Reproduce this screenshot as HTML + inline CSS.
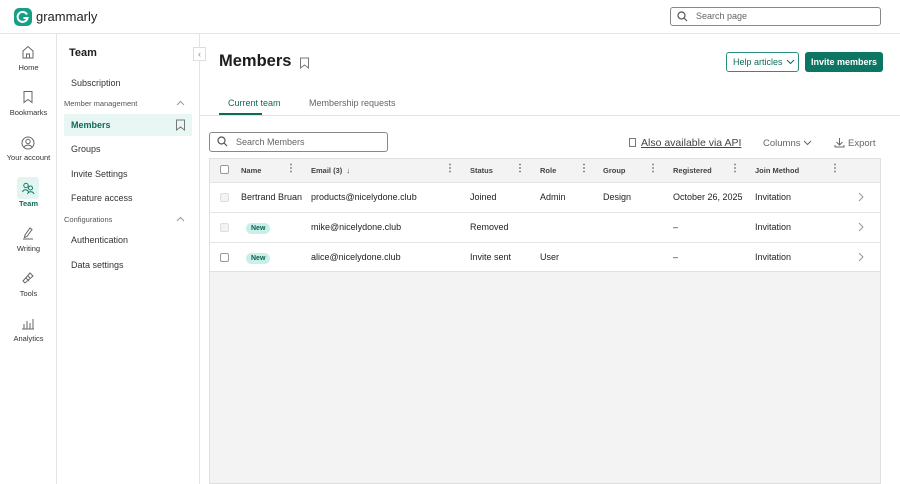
<!DOCTYPE html><html><head><style>
*{box-sizing:border-box;margin:0;padding:0}
body{width:900px;height:484px;overflow:hidden;font-family:"Liberation Sans",sans-serif;color:#1d1d1d;background:#fff;position:relative;font-size:9px}
.a{position:absolute}
.top{left:0;top:0;width:900px;height:34px;border-bottom:1px solid #e4e4e4}
.rail{left:0;top:34px;width:57px;height:450px;border-right:1px solid #e4e4e4}
.ri{position:absolute;left:0;width:57px;text-align:center;font-size:7.5px;color:#333}
.ic{position:absolute;left:21px}
.side{left:57px;top:34px;width:143px;height:450px;border-right:1px solid #e4e4e4}
.sn{position:absolute;left:14px;font-size:9px;color:#333}
.sh{position:absolute;left:7px;font-size:7.5px;color:#555}
.th{position:absolute;top:166px;font-size:7.5px;color:#444;font-weight:bold}
.td{position:absolute;font-size:9px;color:#222}
.dots{position:absolute;top:164px;font-size:10px;color:#666;font-weight:bold;line-height:1}
.new{background:#c8efe8;color:#0d5c4f;font-size:7px;font-weight:bold;padding:2px 5px;border-radius:7px}
.cb{position:absolute;left:220px;width:9px;height:9px;border:1px solid #bbb;border-radius:2px;background:#f3f3f3}
</style></head><body>
<div class="a top"></div>
<svg class="a" style="left:14px;top:8px" width="18" height="18" viewBox="0 0 18 18"><rect width="18" height="18" rx="5" fill="#15a085"/><path d="M13 6.5A5 5 0 1 0 13.5 10H9.5" stroke="#fff" stroke-width="2" fill="none"/></svg>
<div class="a" style="left:36px;top:9px;font-size:13px;color:#222">grammarly</div>
<div class="a" style="left:670px;top:7px;width:211px;height:19px;border:1px solid #888;border-radius:3px"></div>
<svg class="a" style="left:677px;top:11px" width="11" height="11"><circle cx="4.5" cy="4.5" r="3.5" stroke="#555" fill="none" stroke-width="1.2"/><path d="M7 7l3 3" stroke="#555" stroke-width="1.2"/></svg>
<div class="a" style="left:696px;top:11px;font-size:9px;color:#666">Search page</div>

<div class="a rail"></div>
<svg class="ic" style="top:45px" width="14" height="14" fill="none" stroke="#666" stroke-width="1"><path d="M2 6L7 1.5 12 6V13H2Z"/><path d="M5.5 13V9h3v4"/></svg><div class="ri" style="top:63px">Home</div>
<svg class="ic" style="top:90px" width="14" height="14" fill="none" stroke="#666" stroke-width="1"><path d="M3 1.5h8v11L7 9.5 3 12.5Z"/></svg><div class="ri" style="top:108px">Bookmarks</div>
<svg class="ic" style="top:136px" width="14" height="14" fill="none" stroke="#666" stroke-width="1"><circle cx="7" cy="7" r="6"/><circle cx="7" cy="5.5" r="2.2"/><path d="M3 11c2-2.5 6-2.5 8 0"/></svg><div class="ri" style="top:153px">Your account</div>
<div class="a" style="left:17px;top:177px;width:22px;height:22px;background:#e3f5f1;border-radius:3px"></div>
<svg class="ic" style="top:181px" width="14" height="14" fill="none" stroke="#0d7a66" stroke-width="1"><circle cx="5" cy="4.5" r="2.2"/><circle cx="9.5" cy="7" r="2"/><path d="M1.5 11c1-3 5-3 6 0M6.5 13c1-3 5.5-3 6.5 0"/></svg><div class="ri" style="top:199px;color:#0d6b5a;font-weight:bold">Team</div>
<svg class="ic" style="top:226px" width="14" height="14" fill="none" stroke="#666" stroke-width="1"><path d="M4 9l5-7 2 1.5-5 7-2.5 1z"/><path d="M2 13h10"/></svg><div class="ri" style="top:244px">Writing</div>
<svg class="ic" style="top:271px" width="14" height="14" fill="none" stroke="#666" stroke-width="1"><path d="M2 10l7-8 3 3-8 7z"/><path d="M5 7l3 3M7 5l2 2"/></svg><div class="ri" style="top:289px">Tools</div>
<svg class="ic" style="top:316px" width="14" height="14" fill="none" stroke="#666" stroke-width="1"><path d="M1 13h12M3 13V8M6 13V5M9 13V7M12 13V3"/></svg><div class="ri" style="top:334px">Analytics</div>

<div class="a side"></div>
<div class="a" style="left:69px;top:47px;font-size:11px;font-weight:bold">Team</div>
<div class="a" style="left:193px;top:47px;width:13px;height:14px;border:1px solid #ddd;background:#fff;font-size:9px;color:#888;text-align:center;line-height:12px">‹</div>
<div class="sn" style="left:71px;top:78px">Subscription</div>
<div class="sh" style="left:64px;top:99px">Member management</div>
<svg class="a" style="left:176px;top:100px" width="9" height="6" fill="none" stroke="#999"><path d="M1 5l3.5-3.5L8 5"/></svg>
<div class="a" style="left:64px;top:114px;width:128px;height:22px;background:#e8f6f4"></div>
<div class="sn" style="left:71px;top:120px;color:#0d6b5a;font-weight:bold">Members</div>
<svg class="a" style="left:175px;top:119px" width="11" height="12" fill="none" stroke="#777"><path d="M1.5 1h8v10L5.5 8 1.5 11Z"/></svg>
<div class="sn" style="left:71px;top:144px">Groups</div>
<div class="sn" style="left:71px;top:169px">Invite Settings</div>
<div class="sn" style="left:71px;top:193px">Feature access</div>
<div class="sh" style="left:64px;top:215px">Configurations</div>
<svg class="a" style="left:176px;top:216px" width="9" height="6" fill="none" stroke="#999"><path d="M1 5l3.5-3.5L8 5"/></svg>
<div class="sn" style="left:71px;top:235px">Authentication</div>
<div class="sn" style="left:71px;top:260px">Data settings</div>

<div class="a" style="left:219px;top:52px;font-size:16.5px;font-weight:bold">Members</div>
<svg class="a" style="left:299px;top:57px" width="11" height="12" fill="none" stroke="#777"><path d="M1.5 1h8v10L5.5 8 1.5 11Z"/></svg>
<div class="a" style="left:726px;top:52px;width:73px;height:20px;border:1px solid #2a8f7c;border-radius:3px;font-size:9px;color:#0d6b5a;line-height:18px;padding-left:6px">Help articles</div>
<svg class="a" style="left:786px;top:59px" width="9" height="6" fill="none" stroke="#0d6b5a"><path d="M1 1l3.5 3.5L8 1"/></svg>
<div class="a" style="left:805px;top:52px;width:78px;height:20px;background:#0d7663;border-radius:3px;font-size:9px;color:#fff;font-weight:bold;line-height:20px;text-align:center">Invite members</div>
<div class="a" style="left:228px;top:98px;font-size:9px;color:#0d6b5a">Current team</div>
<div class="a" style="left:219px;top:113px;width:43px;height:2px;background:#0d6b5a"></div>
<div class="a" style="left:309px;top:98px;font-size:9px;color:#666">Membership requests</div>
<div class="a" style="left:200px;top:115px;width:700px;height:1px;background:#e2e2e2"></div>

<div class="a" style="left:209px;top:132px;width:179px;height:20px;border:1px solid #888;border-radius:3px"></div>
<svg class="a" style="left:217px;top:136px" width="11" height="11"><circle cx="4.5" cy="4.5" r="3.5" stroke="#555" fill="none" stroke-width="1.2"/><path d="M7 7l3 3" stroke="#555" stroke-width="1.2"/></svg>
<div class="a" style="left:236px;top:137px;font-size:9px;color:#666">Search Members</div>
<div class="a" style="left:629px;top:138px;width:7px;height:9px;border:1px solid #777"></div>
<div class="a" style="left:641px;top:137px;font-size:10.5px;color:#444;text-decoration:underline">Also available via API</div>
<div class="a" style="left:763px;top:138px;font-size:9.5px;color:#666">Columns</div>
<svg class="a" style="left:803px;top:140px" width="9" height="6" fill="none" stroke="#666"><path d="M1 1l3.5 3.5L8 1"/></svg>
<svg class="a" style="left:834px;top:137px" width="11" height="11" fill="none" stroke="#666"><path d="M5.5 1v7M2.5 5l3 3 3-3M1 8v2h9V8"/></svg>
<div class="a" style="left:848px;top:138px;font-size:9.5px;color:#666">Export</div>

<div class="a" style="left:209px;top:158px;width:672px;height:326px;border:1px solid #e0e0e0;background:#f3f3f3"></div>
<div class="a" style="left:210px;top:182px;width:670px;height:90px;background:#fff"></div>
<div class="a" style="left:210px;top:212px;width:670px;height:1px;background:#e4e4e4"></div>
<div class="a" style="left:210px;top:242px;width:670px;height:1px;background:#e4e4e4"></div>
<div class="a" style="left:210px;top:182px;width:670px;height:1px;background:#e4e4e4"></div>
<div class="a" style="left:210px;top:271px;width:670px;height:1px;background:#e0e0e0"></div>
<div class="cb" style="top:165px;background:#fff;border-color:#999"></div>
<div class="th" style="left:241px">Name</div><div class="dots" style="left:286px">⋮</div>
<div class="th" style="left:311px">Email (3) &nbsp;↓</div><div class="dots" style="left:445px">⋮</div>
<div class="th" style="left:470px">Status</div><div class="dots" style="left:515px">⋮</div>
<div class="th" style="left:540px">Role</div><div class="dots" style="left:579px">⋮</div>
<div class="th" style="left:603px">Group</div><div class="dots" style="left:648px">⋮</div>
<div class="th" style="left:673px">Registered</div><div class="dots" style="left:730px">⋮</div>
<div class="th" style="left:755px">Join Method</div><div class="dots" style="left:830px">⋮</div>

<div class="cb" style="top:193px;border-color:#ddd"></div>
<div class="td" style="left:241px;top:192px">Bertrand Bruan</div><div class="td" style="left:311px;top:192px">products@nicelydone.club</div>
<div class="td" style="left:470px;top:192px">Joined</div><div class="td" style="left:540px;top:192px">Admin</div><div class="td" style="left:603px;top:192px">Design</div>
<div class="td" style="left:673px;top:192px">October 26, 2025</div><div class="td" style="left:755px;top:192px">Invitation</div>
<svg class="a" style="left:858px;top:192px" width="6" height="10" fill="none" stroke="#999"><path d="M1 1l4 4-4 4"/></svg>

<div class="cb" style="top:223px;border-color:#ddd"></div>
<div class="td" style="left:246px;top:222px"><span class="new">New</span></div><div class="td" style="left:311px;top:222px">mike@nicelydone.club</div>
<div class="td" style="left:470px;top:222px">Removed</div><div class="td" style="left:673px;top:222px">–</div><div class="td" style="left:755px;top:222px">Invitation</div>
<svg class="a" style="left:858px;top:222px" width="6" height="10" fill="none" stroke="#999"><path d="M1 1l4 4-4 4"/></svg>

<div class="cb" style="top:253px;background:#fff;border-color:#999"></div>
<div class="td" style="left:246px;top:252px"><span class="new">New</span></div><div class="td" style="left:311px;top:252px">alice@nicelydone.club</div>
<div class="td" style="left:470px;top:252px">Invite sent</div><div class="td" style="left:540px;top:252px">User</div><div class="td" style="left:673px;top:252px">–</div><div class="td" style="left:755px;top:252px">Invitation</div>
<svg class="a" style="left:858px;top:252px" width="6" height="10" fill="none" stroke="#999"><path d="M1 1l4 4-4 4"/></svg>
</body></html>
